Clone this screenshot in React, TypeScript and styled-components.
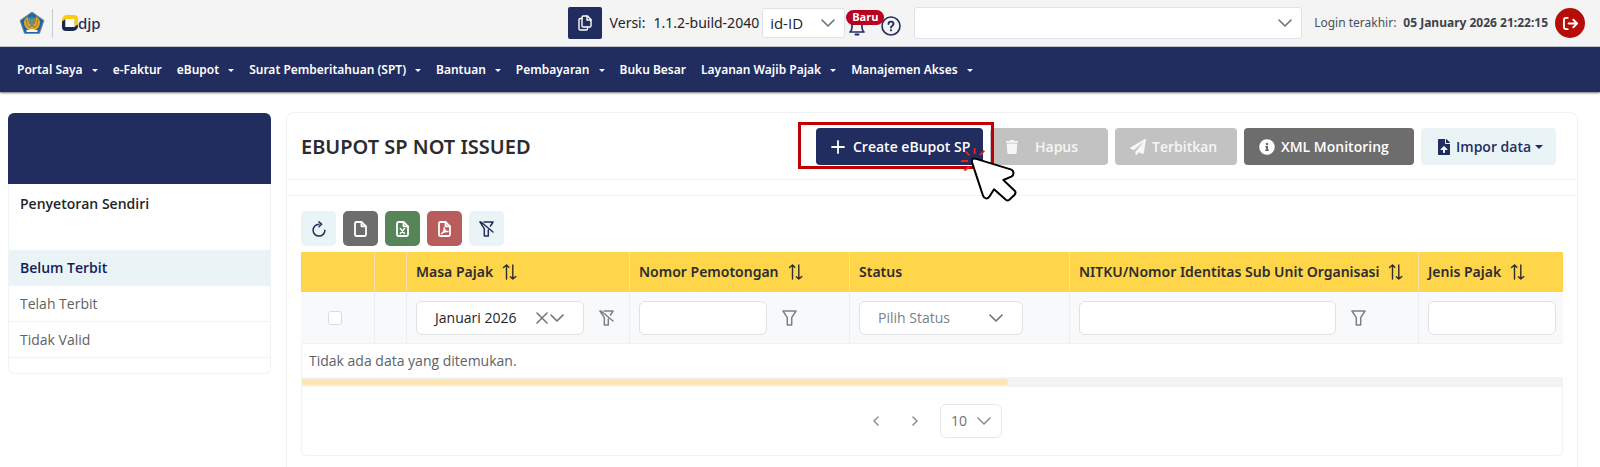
import React from "react";
import styled, { createGlobalStyle } from "styled-components";
import { FaTrash, FaPaperPlane, FaInfoCircle, FaFileUpload } from "react-icons/fa";
import { FaArrowRightFromBracket } from "react-icons/fa6";

const navy = "#212c5f";
const line = "#f1f2f3";
const fieldBorder = "#dee2e6";
const pale = "#eaf4f7";
const headingFont = `"Noto Sans", "Open Sans", sans-serif`;

const GlobalStyle = createGlobalStyle`
  *, *::before, *::after { box-sizing: border-box; }
  body {
    margin: 0;
    background: #ffffff;
    color: #212529;
    font-family: "Open Sans", "Noto Sans", sans-serif;
    font-size: 14px;
    line-height: 20px;
  }
  button, input, select { font: inherit; color: inherit; margin: 0; }
  button { cursor: pointer; }
  a { color: inherit; text-decoration: none; }
  svg { display: block; flex: none; }
`;

const Page = styled.div`
  min-height: 100vh;
  display: flex;
  flex-direction: column;
`;

/* ---------- icons ---------- */

const Stroke = styled.svg.attrs({ fill: "none", stroke: "currentColor" })`
  stroke-linecap: round;
  stroke-linejoin: round;
`;

const ChevronDown = () => (
  <Stroke width="14" height="8" viewBox="0 0 14 8" strokeWidth="1.6"><path d="M1 1l6 6 6-6" /></Stroke>
);
const ChevronSide = ({ next }: { next?: boolean }) => (
  <Stroke width="6" height="10" viewBox="0 0 6 10" strokeWidth="1.6"><path d={next ? "M1 1l4 4-4 4" : "M5 1L1 5l4 4"} /></Stroke>
);
const CopyIcon = () => (
  <Stroke width="14" height="16" viewBox="0 0 14 16" strokeWidth="1.4">
    <path d="M4 2.2C4 1.400 4.500 1 5.200 1H9.500L13 4.500V10.800C13 11.600 12.500 12 11.800 12H5.200C4.500 12 4 11.600 4 10.800Z" />
    <path d="M9 1.200V5H12.800M4 3.500H2.200C1.400 3.500 1 4 1 4.700V13.800C1 14.600 1.400 15 2.200 15H8.300C9.100 15 9.500 14.600 9.500 13.800V12" />
  </Stroke>
);
const BellIcon = () => (
  <Stroke width="16" height="18" viewBox="0 0 16 18" strokeWidth="1.7">
    <path d="M1 14H15C13.600 12.700 13 11.500 13 9.500V7C13 4 11 2 8 2S3 4 3 7V9.500C3 11.500 2.400 12.700 1 14Z" />
    <path d="M6.500 16.500H9.500" strokeWidth="2" />
  </Stroke>
);
const HelpIcon = () => (
  <Stroke width="20" height="20" viewBox="0 0 20 20" strokeWidth="1.6">
    <circle cx="10" cy="10" r="9" />
    <path d="M7.500 8C7.500 6.500 8.600 5.600 10 5.600S12.500 6.500 12.500 7.900C12.500 9.700 10 9.700 10 11.500" strokeWidth="1.900" />
    <circle cx="10" cy="14.300" r="0.500" strokeWidth="1.200" />
  </Stroke>
);
const RefreshIcon = () => (
  <Stroke width="14" height="16" viewBox="0 0 14 16" strokeWidth="1.5">
    <path d="M7 3.300A5.900 5.900 0 1 0 12.900 9.200" /><path d="M7 0.900L9.700 3.300 7 5.700" />
  </Stroke>
);
const pageOutline = "M1 2.400C1 1.500 1.500 1 2.400 1H7.500L12 5.300V13.600C12 14.500 11.500 15 10.600 15H2.400C1.500 15 1 14.500 1 13.600Z";
const FileIcon = ({ mark }: { mark?: string }) => (
  <Stroke width="13" height="16" viewBox="0 0 13 16" strokeWidth="1.8">
    <path d={pageOutline} /><path d="M7.500 1V5.300H12" />{mark && <path d={mark} strokeWidth="1.500" />}
  </Stroke>
);
const FilterIcon = () => (
  <Stroke width="15" height="16" viewBox="0 0 15 16" strokeWidth="1.5"><path d="M1 1H14L9.700 7.600V15H5.300V7.600Z" /></Stroke>
);
const FilterSlashIcon = () => (
  <Stroke width="15" height="16" viewBox="0 0 15 16" strokeWidth="1.5">
    <path d="M5 1H14L11.500 5M1 1L5.300 7.600V15H9.300V9M1 1H2L14 11" />
  </Stroke>
);
const SortIcon = () => (
  <Stroke width="15" height="16" viewBox="0 0 15 16" strokeWidth="1.4">
    <path d="M4.500 15V1M1.500 3.500L4.500 1 6.800 3.200M10.800 1V15M8.400 12.700L10.800 15 13.800 12.500" />
  </Stroke>
);
const ClearIcon = () => (
  <Stroke width="12" height="12" viewBox="0 0 12 12" strokeWidth="1.5"><path d="M1 1L11 11M11 1L1 11" /></Stroke>
);
const PlusIcon = () => (
  <Stroke width="14" height="14" viewBox="0 0 14 14" strokeWidth="1.8"><path d="M7 1V13M1 7H13" /></Stroke>
);
const Emblem = () => (
  <svg width="26" height="24" viewBox="0 0 26 24" aria-hidden="true">
    <path d="M13 1L25 9.500 20.500 22.500H5.500L1 9.500Z" fill="#1b66ad" stroke="#8a8f86" strokeWidth="1" strokeLinejoin="round" />
    <path d="M9 5.500C5.500 7.500 4.300 10.500 5.500 14 6.300 17 9 19 13 19S19.700 17 20.500 14C21.700 10.500 20.500 7.500 17 5.500L16 13H10Z" fill="#eaa51d" />
    <path d="M7.500 8.500C7 13 9 16 11.500 17M18.500 8.500C19 13 17 16 14.500 17" fill="none" stroke="#8f7a3a" strokeWidth="1" />
    <path d="M10.500 6.500L13 5 15.500 6.500 14.500 16H11.500Z" fill="#2f7f96" />
    <path d="M13 8V17M10.800 7V14M15.200 7V14" stroke="#e0b040" strokeWidth="0.800" />
    <path d="M7.500 19L13 18 18.500 19V21H7.500Z" fill="#f5f3e8" />
  </svg>
);
const DjpMark = () => (
  <svg width="16" height="16" viewBox="0 0 16 16" aria-hidden="true">
    <path d="M0 8V5A5 5 0 0 1 5 0H12A4 4 0 0 1 16 4V11L12.500 14V4H3.500V9Z" fill="#fbc90f" />
    <path d="M0 6.500L3.500 4V12H12.500V4L16 11A5 5 0 0 1 11 16H4A4 4 0 0 1 0 12Z" fill="#1c2750" />
    <path d="M12.500 4L16 2.500V9L12.500 12Z" fill="#fbc90f" />
    <path d="M3.500 4H12.500V12H3.500Z" fill="#fff" />
  </svg>
);

/* ---------- top bar ---------- */

const TopBar = styled.header`
  display: flex;
  align-items: center;
  height: 47px;
  padding: 0 15px 0 19px;
  background: #f4f4f4;
  border-bottom: 1px solid #c9cbd5;
`;
const Brand = styled.a`
  display: flex;
  align-items: center;
`;
const BrandRule = styled.span`
  width: 1px;
  height: 29px;
  margin: 0 9px 0 7px;
  background: #c9cad2;
`;
const BrandName = styled.span`
  font-family: ${headingFont};
  font-size: 15px;
  font-weight: 500;
  color: ${navy};
`;
const TopTools = styled.div`
  display: flex;
  align-items: center;
  margin-left: auto;
`;
const CopyButton = styled.button`
  display: grid;
  place-items: center;
  width: 34px;
  height: 32px;
  padding: 0;
  border: 0;
  border-radius: 2px;
  color: #fff;
  background: ${navy};
`;
const Version = styled.span`
  display: flex;
  gap: 8px;
  margin: 0 3px 0 8px;
  font-family: ${headingFont};
  font-size: 14px;
  white-space: nowrap;
`;
const SelectBox = styled.span<{ $w: number; $h?: number; $end?: number; $tone?: string }>`
  position: relative;
  display: flex;
  align-items: center;
  width: ${(p) => p.$w}px;
  height: ${(p) => p.$h ?? 34}px;
  color: ${(p) => p.$tone ?? "#6c757d"};
  & > svg {
    position: absolute;
    right: ${(p) => p.$end ?? 20}px;
    pointer-events: none;
  }
`;
const Select = styled.select<{ $pad?: number; $tone?: string; $size?: number; $edge?: string; $round?: number }>`
  appearance: none;
  width: 100%;
  height: 100%;
  padding: 0 ${(p) => p.$pad ?? 16}px;
  text-indent: 2px;
  border: 1px solid ${(p) => p.$edge ?? fieldBorder};
  border-radius: ${(p) => p.$round ?? 6}px;
  background: #fff;
  color: ${(p) => p.$tone ?? "#212529"};
  font-size: ${(p) => p.$size ?? 14}px;
`;
const Notify = styled.button`
  position: relative;
  display: grid;
  width: 36px;
  height: 32px;
  padding: 11px 0 0 4px;
  border: 0;
  background: none;
  color: ${navy};
`;
const NewBadge = styled.span`
  position: absolute;
  top: 3px;
  left: 1px;
  height: 15px;
  padding: 0 6px;
  border-radius: 8px;
  background: #b90020;
  color: #fff;
  font-size: 11px;
  font-weight: 700;
  line-height: 14px;
`;
const PlainButton = styled.button`
  display: grid;
  place-items: center;
  padding: 0;
  border: 0;
  background: none;
`;
const HelpButton = styled(PlainButton)`
  margin: 5px 13px 0 0;
  color: ${navy};
`;
const LastLogin = styled.span`
  display: flex;
  gap: 7px;
  margin: 0 7px 0 12px;
  font-family: ${headingFont};
  font-size: 12px;
  color: #4c4f54;
  white-space: nowrap;
  strong { font-weight: 700; color: #3d4248; }
`;
const LogoutButton = styled(PlainButton)`
  width: 30px;
  height: 30px;
  border-radius: 50%;
  background: #b50d08;
  color: #fff;
`;

/* ---------- navigation ---------- */

const Nav = styled.nav`
  display: flex;
  align-items: center;
  gap: 15px;
  height: 45px;
  padding: 1px 17px 0;
  background: ${navy};
  box-shadow: 0 1px 2px #00000090;
  color: #fff;
  font-family: ${headingFont};
  font-size: 12px;
  font-weight: 600;
  white-space: nowrap;
`;
const NavLink = styled.a`
  display: flex;
  align-items: center;
  gap: 9px;
`;
const Caret = styled.i<{ $size?: number }>`
  border: ${(p) => p.$size ?? 3}px solid transparent;
  border-top-color: currentColor;
  border-bottom: 0;
`;

const navItems: [string, boolean][] = [
  ["Portal Saya", true], ["e-Faktur", false], ["eBupot", true], ["Surat Pemberitahuan (SPT)", true],
  ["Bantuan", true], ["Pembayaran", true], ["Buku Besar", false], ["Layanan Wajib Pajak", true],
  ["Manajemen Akses", true],
];

/* ---------- body ---------- */

const Body = styled.div`
  flex: 1;
  display: flex;
  gap: 15px;
  padding: 20px 22px 0 8px;
`;
const Sidebar = styled.aside`
  align-self: flex-start;
  width: 263px;
  margin-top: 1px;
`;
const SideBanner = styled.div`
  height: 71px;
  border-radius: 6px 6px 0 0;
  background: ${navy};
`;
const SideMenu = styled.div`
  padding-bottom: 15px;
  border: 1px solid ${line};
  border-top: 0;
  border-radius: 0 0 6px 6px;
`;
const SideTitle = styled.h2`
  height: 66px;
  margin: 0;
  padding: 10px 11px;
  font-size: 14px;
  font-weight: 600;
  line-height: 20px;
`;
const SideLink = styled.a<{ $active?: boolean }>`
  display: flex;
  align-items: center;
  height: 36px;
  padding: 0 11px;
  border-bottom: 1px solid ${line};
  background: ${(p) => (p.$active ? pale : "transparent")};
  color: ${(p) => (p.$active ? "#101d5c" : "#5f6163")};
  font-weight: ${(p) => (p.$active ? 600 : 400)};
`;
const Card = styled.main`
  flex: 1;
  min-width: 0;
  border: 1px solid ${line};
  border-bottom: 0;
  border-radius: 8px 8px 0 0;
`;
const CardHead = styled.div`
  display: flex;
  align-items: center;
  justify-content: space-between;
  height: 67px;
  padding: 0 21px 0 14px;
  border-bottom: 1px solid ${line};
`;
const Title = styled.h1`
  margin: 0;
  padding-top: 2px;
  font-family: ${headingFont};
  font-size: 20px;
  font-weight: 600;
  line-height: 28px;
  color: #2a2c2e;
`;
const Actions = styled.div`
  display: flex;
  gap: 7px;
`;
const ActionButton = styled.button<{ $bg: string; $w: number; $gap?: number; $ink?: string }>`
  display: flex;
  align-items: center;
  gap: ${(p) => p.$gap ?? 7}px;
  width: ${(p) => p.$w}px;
  height: 37px;
  padding: 1px 15px 0;
  border: 0;
  border-radius: 4px;
  background: ${(p) => p.$bg};
  color: ${(p) => p.$ink ?? "#fff"};
  font-weight: 600;
  white-space: nowrap;
  &:disabled { color: #f6f6f6; }
`;
const Highlighted = styled.div`
  position: relative;
  z-index: 1;
`;
const Frame = styled.div`
  position: absolute;
  inset: -6px -11px -4px -18px;
  border: 3px solid #c00000;
  pointer-events: none;
`;
const Pointer = styled.svg`
  position: absolute;
  left: 144px;
  top: 17px;
  pointer-events: none;
`;
const Divider = styled.div`
  height: 16px;
  border-bottom: 1px solid ${line};
`;
const Content = styled.div`
  padding: 15px 14px 0;
`;
const Toolbar = styled.div`
  display: flex;
  gap: 7px;
  margin-bottom: 6px;
`;
const ToolButton = styled(PlainButton)<{ $bg?: string }>`
  width: 35px;
  height: 35px;
  border-radius: 5px;
  background: ${(p) => p.$bg ?? pale};
  color: ${(p) => (p.$bg ? "#fff" : navy)};
`;
const TableClip = styled.div`
  overflow: hidden;
`;
const Table = styled.table`
  width: 100%;
  table-layout: fixed;
  border-collapse: separate;
  border-spacing: 0;
`;
const Th = styled.th`
  height: 40px;
  padding: 0 8px 0 9px;
  border-right: 1px solid #f3e3ab;
  background: #ffd54a;
  color: #2b2d30;
  font-family: ${headingFont};
  font-weight: 600;
  text-align: left;
  white-space: nowrap;
  &:last-child { border-right: 0; }
`;
const SortLabel = styled.span`
  display: flex;
  align-items: center;
  gap: 9px;
`;
const FilterCell = styled.td`
  height: 52px;
  padding: 0 8px 0 9px;
  border-right: 1px solid #eceef0;
  border-bottom: 1px solid ${line};
  background: #f8f9fb;
  &:last-child { border-right: 0; padding-right: 7px; }
`;
const FilterRow = styled.div<{ $center?: boolean }>`
  display: flex;
  align-items: center;
  justify-content: ${(p) => (p.$center ? "center" : "flex-start")};
  gap: 15px;
  color: #7b8187;
`;
const TextField = styled.input<{ $w: string }>`
  display: block;
  width: ${(p) => p.$w};
  height: 34px;
  padding: 0 10px;
  border: 1px solid ${fieldBorder};
  border-radius: 6px;
  background: #fff;
`;
const Check = styled.input`
  appearance: none;
  width: 14px;
  height: 14px;
  margin: 0 6px 0 0;
  border: 1px solid #d9dcde;
  border-radius: 3px;
  background: #fff;
`;
const ClearButton = styled(PlainButton)`
  position: absolute;
  right: 36px;
`;
const EmptyCell = styled.td`
  height: 33px;
  padding: 0 7px;
  border-left: 1px solid ${line};
  color: #5c6269;
`;
const ScrollTrack = styled.div`
  padding: 2px 1px;
  background: #f3f3f3;
`;
const ScrollThumb = styled.div`
  width: 56%;
  height: 6px;
  border-radius: 3px;
  background: #fde6ad;
`;
const Pager = styled.div`
  display: flex;
  align-items: center;
  justify-content: center;
  height: 69px;
  padding-right: 6px;
  border: 1px solid ${line};
  border-top: 0;
  border-radius: 0 0 6px 6px;
  color: #8d9297;
`;
const PageButton = styled(PlainButton)`
  width: 39px;
  height: 32px;
`;
const PageSize = styled(SelectBox)`
  margin-left: 6px;
`;

const columns = [74, 32, 223, 220, 220, 349];

const Sortable = ({ label }: { label: string }) => (
  <SortLabel>{label}<SortIcon /></SortLabel>
);

export default function App() {
  return (
    <Page>
      <GlobalStyle />
      <TopBar>
        <Brand href="#" aria-label="djp">
          <Emblem /><BrandRule /><DjpMark /><BrandName>djp</BrandName>
        </Brand>
        <TopTools>
          <CopyButton aria-label="Salin"><CopyIcon /></CopyButton>
          <Version><span>Versi:</span><span>1.1.2-build-2040</span></Version>
          <SelectBox $w={83} $h={30} $end={10}>
            <Select aria-label="Bahasa" $pad={5} $size={15} $round={3}><option>id-ID</option></Select>
            <ChevronDown />
          </SelectBox>
          <Notify aria-label="Notifikasi"><BellIcon /><NewBadge>Baru</NewBadge></Notify>
          <HelpButton aria-label="Bantuan"><HelpIcon /></HelpButton>
          <SelectBox $w={388} $h={32} $end={10}>
            <Select aria-label="Wajib pajak" $round={3}><option /></Select>
            <ChevronDown />
          </SelectBox>
          <LastLogin><span>Login terakhir:</span><strong>05 January 2026 21:22:15</strong></LastLogin>
          <LogoutButton aria-label="Keluar"><FaArrowRightFromBracket size={15} /></LogoutButton>
        </TopTools>
      </TopBar>
      <Nav>
        {navItems.map(([label, menu]) => (
          <NavLink href="#" key={label}>{label}{menu && <Caret />}</NavLink>
        ))}
      </Nav>
      <Body>
        <Sidebar>
          <SideBanner />
          <SideMenu>
            <SideTitle>Penyetoran Sendiri</SideTitle>
            <SideLink href="#" $active>Belum Terbit</SideLink>
            <SideLink href="#">Telah Terbit</SideLink>
            <SideLink href="#">Tidak Valid</SideLink>
          </SideMenu>
        </Sidebar>
        <Card>
          <CardHead>
            <Title>EBUPOT SP NOT ISSUED</Title>
            <Actions>
              <Highlighted>
                <ActionButton $bg={navy} $w={167} $gap={8}><PlusIcon />Create eBupot SP</ActionButton>
                <Frame />
                <Pointer width="60" height="58" viewBox="540 105 180 174" aria-hidden="true">
                  <path d="M584 115V132M613 122L600 135M557 125L568 136M543 153H564M553 181L568 170" stroke="#ff1a10" strokeWidth="6" fill="none" />
                  <path d="M586 146L692 178C704 182 702 196 694 200L670 210L704 242Q709 248 704 254L688 269Q682 274 676 268L642 238L629 259C623 269 612 266 609 257L576 157Q574 143 586 146Z" fill="#fff" stroke="#000" strokeWidth="6" strokeLinejoin="round" />
                </Pointer>
              </Highlighted>
              <ActionButton $bg="#c2c2c2" $w={118} $gap={16} disabled><FaTrash size={14} />Hapus</ActionButton>
              <ActionButton $bg="#c2c2c2" $w={122} $gap={6} disabled><FaPaperPlane size={16} />Terbitkan</ActionButton>
              <ActionButton $bg="#6d6d6d" $w={170} $gap={6}><FaInfoCircle size={16} />XML Monitoring</ActionButton>
              <ActionButton $bg={pale} $w={135} $gap={4} $ink={navy}><FaFileUpload size={16} />Impor data<Caret $size={4} /></ActionButton>
            </Actions>
          </CardHead>
          <Divider />
          <Content>
            <Toolbar>
              <ToolButton aria-label="Muat ulang"><RefreshIcon /></ToolButton>
              <ToolButton aria-label="Ekspor CSV" $bg="#6d6d6d"><FileIcon /></ToolButton>
              <ToolButton aria-label="Ekspor Excel" $bg="#568559"><FileIcon mark="M4.300 7.500L8.500 12.500M8.500 7.500L4.300 12.500" /></ToolButton>
              <ToolButton aria-label="Ekspor PDF" $bg="#b85c5c"><FileIcon mark="M3.500 12.500C5.500 11.500 6.500 9.500 6.200 6.800C6.500 9.500 8 10.800 10 10.500C8 10.300 5.500 10.800 3.500 12.500Z" /></ToolButton>
              <ToolButton aria-label="Hapus filter"><FilterSlashIcon /></ToolButton>
            </Toolbar>
            <TableClip>
              <Table>
                <colgroup>{columns.map((w, i) => <col key={i} width={w} />)}<col /></colgroup>
                <thead>
                  <tr>
                    <Th /><Th />
                    <Th><Sortable label="Masa Pajak" /></Th>
                    <Th><Sortable label="Nomor Pemotongan" /></Th>
                    <Th>Status</Th>
                    <Th><Sortable label="NITKU/Nomor Identitas Sub Unit Organisasi" /></Th>
                    <Th><Sortable label="Jenis Pajak" /></Th>
                  </tr>
                </thead>
                <tbody>
                  <tr>
                    <FilterCell><FilterRow $center><Check type="checkbox" aria-label="Pilih semua" /></FilterRow></FilterCell>
                    <FilterCell />
                    <FilterCell>
                      <FilterRow>
                        <SelectBox $w={168}>
                          <Select aria-label="Masa Pajak"><option>Januari 2026</option></Select>
                          <ClearButton aria-label="Hapus pilihan"><ClearIcon /></ClearButton>
                          <ChevronDown />
                        </SelectBox>
                        <PlainButton aria-label="Hapus filter"><FilterSlashIcon /></PlainButton>
                      </FilterRow>
                    </FilterCell>
                    <FilterCell>
                      <FilterRow><TextField $w="128px" aria-label="Nomor Pemotongan" /><PlainButton aria-label="Filter"><FilterIcon /></PlainButton></FilterRow>
                    </FilterCell>
                    <FilterCell>
                      <SelectBox $w={164}>
                        <Select aria-label="Status" $tone="#7b8187"><option>Pilih Status</option></Select>
                        <ChevronDown />
                      </SelectBox>
                    </FilterCell>
                    <FilterCell>
                      <FilterRow><TextField $w="257px" aria-label="NITKU" /><PlainButton aria-label="Filter"><FilterIcon /></PlainButton></FilterRow>
                    </FilterCell>
                    <FilterCell><TextField $w="100%" aria-label="Jenis Pajak" /></FilterCell>
                  </tr>
                  <tr><EmptyCell colSpan={7}>Tidak ada data yang ditemukan.</EmptyCell></tr>
                </tbody>
              </Table>
            </TableClip>
            <ScrollTrack><ScrollThumb /></ScrollTrack>
            <Pager>
              <PageButton aria-label="Sebelumnya"><ChevronSide /></PageButton>
              <PageButton aria-label="Berikutnya"><ChevronSide next /></PageButton>
              <PageSize $w={62} $end={11} $tone="#8d9297">
                <Select aria-label="Baris per halaman" $pad={8} $tone="#6c7075" $edge="#e6e8ea"><option>10</option></Select>
                <ChevronDown />
              </PageSize>
            </Pager>
          </Content>
        </Card>
      </Body>
    </Page>
  );
}
